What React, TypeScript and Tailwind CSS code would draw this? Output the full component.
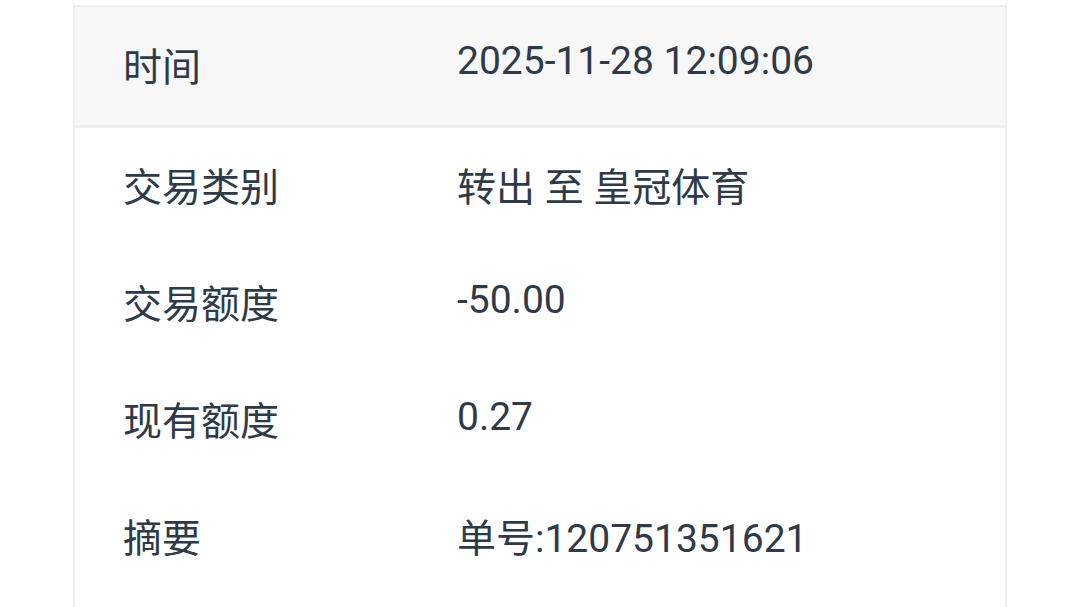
import React from "react";

const rows = [
  { label: "交易类别", value: "转出 至 皇冠体育", num: false },
  { label: "交易额度", value: "-50.00", num: true },
  { label: "现有额度", value: "0.27", num: true },
  { label: "摘要", value: "单号:120751351621", num: false },
];

export default function App() {
  return (
    <div
      className="h-screen bg-white pt-[5px] pl-[73px] overflow-hidden"
      style={{ fontFamily: "Roboto, 'Noto Sans CJK SC', sans-serif" }}
    >
      <div className="w-[934px] h-[640px] border-x-2 border-t-2 border-[#eeeeee] text-[39px] leading-normal text-[#2f3a49]">
        {/* header row */}
        <div className="h-[121px] flex items-center bg-[#f7f7f7] border-b-[3px] border-[#eeeeee] px-[48px] pt-[4px]">
          <div className="w-[334px]">时间</div>
          <div className="mb-[14px]">2025-11-28 12:09:06</div>
        </div>

        {rows.map(r => (
          <div key={r.label} className="h-[117px] flex items-center px-[48px] pt-[4px]">
            <div className="w-[334px]">{r.label}</div>
            <div className={r.num ? "mb-[10px]" : ""}>{r.value}</div>
          </div>
        ))}
      </div>
    </div>
  );
}
